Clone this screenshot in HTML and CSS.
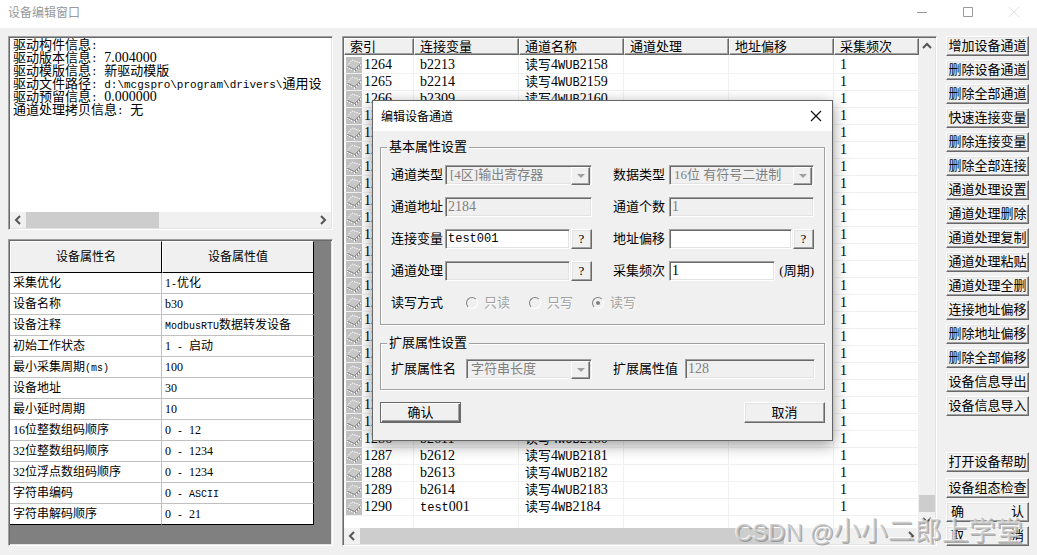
FILE: index.html
```html
<!DOCTYPE html>
<html lang="zh-CN">
<head>
<meta charset="utf-8">
<title>设备编辑窗口</title>
<link rel="stylesheet" href="styles.css">
</head>
<body>
<svg class="symbols" aria-hidden="true">
  <symbol id="chip" viewBox="0 0 16 16">
    <path d="M0 0H16V16H0z" fill="#c0c0c0"/>
    <path d="M1 9 6 3 15 6 9 12z" fill="#c8c8c8"/>
    <path d="M1 9 6 3 15 6" fill="none" stroke="#fff" stroke-dasharray="1.500 1"/>
    <path d="M1 9 8.500 12.500 15 6.500" fill="none" stroke="#8a8a8a"/>
    <path d="M1.500 10V11M3.500 11V12M5.500 12V13M8.500 13V15M10.500 11.500V13M12.500 9.500V11M14.500 7.500V9" stroke="#fff"/>
    <path d="M9.500 12.500V14M11.500 10.500V12M13.500 8.500V10" stroke="#808080"/>
  </symbol>
  <symbol id="left" viewBox="0 0 16 16"><path d="M10 4 6 8l4 4" fill="none" stroke="#555" stroke-width="2"/></symbol>
  <symbol id="right" viewBox="0 0 16 16"><path d="m6 4 4 4-4 4" fill="none" stroke="#555" stroke-width="2"/></symbol>
  <symbol id="up" viewBox="0 0 16 16"><path d="m4 10 4-4 4 4" fill="none" stroke="#555" stroke-width="2"/></symbol>
  <symbol id="down" viewBox="0 0 16 16"><path d="m4 6 4 4 4-4" fill="none" stroke="#555" stroke-width="2"/></symbol>
</svg>

<div class="window">
  <header class="titlebar">
    <h1 class="title">设备编辑窗口</h1>
    <button class="sysbtn" aria-label="最小化"><svg width="12" height="12"><path d="M1 6.500H11" stroke="#999"/></svg></button>
    <button class="sysbtn" aria-label="最大化"><svg width="12" height="12"><path d="M1.500 1.500H10.500V10.500H1.500z" fill="none" stroke="#999"/></svg></button>
    <button class="sysbtn" aria-label="关闭"><svg width="12" height="12"><path d="M1 1 11 11M11 1 1 11" stroke="#e2e2e2"/></svg></button>
  </header>

  <main class="main">
    <div class="left">
      <section class="sunken info">
        <div class="lines">
          <p>驱动构件信息<code>:</code></p>
          <p>驱动版本信息<code>: </code><span class="num">7.004000</span></p>
          <p>驱动模版信息<code>: </code>新驱动模版</p>
          <p>驱动文件路径<code>: d:\mcgspro\program\drivers\</code>通用设</p>
          <p>驱动预留信息<code>: </code><span class="num">0.000000</span></p>
          <p>通道处理拷贝信息<code>: </code>无</p>
        </div>
        <div class="hbar">
          <svg class="arrow"><use href="#left"/></svg>
          <div class="track"><div class="thumb info-thumb"></div></div>
          <svg class="arrow"><use href="#right"/></svg>
        </div>
      </section>
      <section class="sunken props">
        <table class="proptable">
          <thead><tr><th>设备属性名</th><th>设备属性值</th></tr></thead>
          <tbody>
            <tr><td>采集优化</td><td>1<code>-</code>优化</td></tr>
            <tr><td>设备名称</td><td>b30</td></tr>
            <tr><td>设备注释</td><td><code>ModbusRTU</code>数据转发设备</td></tr>
            <tr><td>初始工作状态</td><td>1<code> - </code>启动</td></tr>
            <tr><td>最小采集周期<code>(ms)</code></td><td>100</td></tr>
            <tr><td>设备地址</td><td>30</td></tr>
            <tr><td>最小延时周期</td><td>10</td></tr>
            <tr><td>16位整数组码顺序</td><td>0<code> - </code>12</td></tr>
            <tr><td>32位整数组码顺序</td><td>0<code> - </code>1234</td></tr>
            <tr><td>32位浮点数组码顺序</td><td>0<code> - </code>1234</td></tr>
            <tr><td>字符串编码</td><td>0<code> - ASCII</code></td></tr>
            <tr><td>字符串解码顺序</td><td>0<code> - </code>21</td></tr>
          </tbody>
        </table>
      </section>
    </div>

    <section class="sunken channels">
      <div class="view">
        <div class="listwrap">
        <table class="list">
          <colgroup><col class="c-index"><col class="c-mid"><col class="c-mid"><col class="c-mid"><col class="c-mid"><col></colgroup>
          <thead><tr><th>索引</th><th>连接变量</th><th>通道名称</th><th>通道处理</th><th>地址偏移</th><th>采集频次</th></tr></thead>
          <tbody>
            <tr><td><svg class="chip"><use href="#chip"/></svg>1264</td><td>b2213</td><td><span class="cjk">读写</span>4<code>WUB</code>2158</td><td></td><td></td><td>1</td></tr>
            <tr><td><svg class="chip"><use href="#chip"/></svg>1265</td><td>b2214</td><td><span class="cjk">读写</span>4<code>WUB</code>2159</td><td></td><td></td><td>1</td></tr>
            <tr><td><svg class="chip"><use href="#chip"/></svg>1266</td><td>b2309</td><td><span class="cjk">读写</span>4<code>WUB</code>2160</td><td></td><td></td><td>1</td></tr>
            <tr><td><svg class="chip"><use href="#chip"/></svg>1267</td><td></td><td></td><td></td><td></td><td>1</td></tr>
            <tr><td><svg class="chip"><use href="#chip"/></svg>1268</td><td></td><td></td><td></td><td></td><td>1</td></tr>
            <tr><td><svg class="chip"><use href="#chip"/></svg>1269</td><td></td><td></td><td></td><td></td><td>1</td></tr>
            <tr><td><svg class="chip"><use href="#chip"/></svg>1270</td><td></td><td></td><td></td><td></td><td>1</td></tr>
            <tr><td><svg class="chip"><use href="#chip"/></svg>1271</td><td></td><td></td><td></td><td></td><td>1</td></tr>
            <tr><td><svg class="chip"><use href="#chip"/></svg>1272</td><td></td><td></td><td></td><td></td><td>1</td></tr>
            <tr><td><svg class="chip"><use href="#chip"/></svg>1273</td><td></td><td></td><td></td><td></td><td>1</td></tr>
            <tr><td><svg class="chip"><use href="#chip"/></svg>1274</td><td></td><td></td><td></td><td></td><td>1</td></tr>
            <tr><td><svg class="chip"><use href="#chip"/></svg>1275</td><td></td><td></td><td></td><td></td><td>1</td></tr>
            <tr><td><svg class="chip"><use href="#chip"/></svg>1276</td><td></td><td></td><td></td><td></td><td>1</td></tr>
            <tr><td><svg class="chip"><use href="#chip"/></svg>1277</td><td></td><td></td><td></td><td></td><td>1</td></tr>
            <tr><td><svg class="chip"><use href="#chip"/></svg>1278</td><td></td><td></td><td></td><td></td><td>1</td></tr>
            <tr><td><svg class="chip"><use href="#chip"/></svg>1279</td><td></td><td></td><td></td><td></td><td>1</td></tr>
            <tr><td><svg class="chip"><use href="#chip"/></svg>1280</td><td></td><td></td><td></td><td></td><td>1</td></tr>
            <tr><td><svg class="chip"><use href="#chip"/></svg>1281</td><td></td><td></td><td></td><td></td><td>1</td></tr>
            <tr><td><svg class="chip"><use href="#chip"/></svg>1282</td><td></td><td></td><td></td><td></td><td>1</td></tr>
            <tr><td><svg class="chip"><use href="#chip"/></svg>1283</td><td></td><td></td><td></td><td></td><td>1</td></tr>
            <tr><td><svg class="chip"><use href="#chip"/></svg>1284</td><td></td><td></td><td></td><td></td><td>1</td></tr>
            <tr><td><svg class="chip"><use href="#chip"/></svg>1285</td><td></td><td></td><td></td><td></td><td>1</td></tr>
            <tr><td><svg class="chip"><use href="#chip"/></svg>1286</td><td>b2611</td><td><span class="cjk">读写</span>4<code>WUB</code>2180</td><td></td><td></td><td>1</td></tr>
            <tr><td><svg class="chip"><use href="#chip"/></svg>1287</td><td>b2612</td><td><span class="cjk">读写</span>4<code>WUB</code>2181</td><td></td><td></td><td>1</td></tr>
            <tr><td><svg class="chip"><use href="#chip"/></svg>1288</td><td>b2613</td><td><span class="cjk">读写</span>4<code>WUB</code>2182</td><td></td><td></td><td>1</td></tr>
            <tr><td><svg class="chip"><use href="#chip"/></svg>1289</td><td>b2614</td><td><span class="cjk">读写</span>4<code>WUB</code>2183</td><td></td><td></td><td>1</td></tr>
            <tr><td><svg class="chip"><use href="#chip"/></svg>1290</td><td><code>test</code>001</td><td><span class="cjk">读写</span>4<code>WB</code>2184</td><td></td><td></td><td>1</td></tr>
            <tr class="filler"><td></td><td></td><td></td><td></td><td></td><td></td></tr>
          </tbody>
        </table>
        </div>
        <div class="vbar">
          <svg class="arrow"><use href="#up"/></svg>
          <div class="vtrack"><div class="vthumb"></div></div>
          <svg class="arrow"><use href="#down"/></svg>
        </div>
      </div>
      <div class="hbar">
        <svg class="arrow"><use href="#left"/></svg>
        <div class="track"><div class="thumb list-thumb"></div></div>
        <svg class="arrow"><use href="#right"/></svg>
        <div class="corner"></div>
      </div>
    </section>

    <nav class="actions">
      <button class="btn">增加设备通道</button>
      <button class="btn">删除设备通道</button>
      <button class="btn">删除全部通道</button>
      <button class="btn">快速连接变量</button>
      <button class="btn">删除连接变量</button>
      <button class="btn">删除全部连接</button>
      <button class="btn">通道处理设置</button>
      <button class="btn">通道处理删除</button>
      <button class="btn">通道处理复制</button>
      <button class="btn">通道处理粘贴</button>
      <button class="btn">通道处理全删</button>
      <button class="btn">连接地址偏移</button>
      <button class="btn">删除地址偏移</button>
      <button class="btn">删除全部偏移</button>
      <button class="btn">设备信息导出</button>
      <button class="btn">设备信息导入</button>
      <div class="bottom">
        <button class="btn">打开设备帮助</button>
        <button class="btn">设备组态检查</button>
        <button class="btn spread">确 认</button>
        <button class="btn spread">取 消</button>
      </div>
    </nav>
  </main>

  <section class="dialog" role="dialog" aria-labelledby="dlg-title">
    <header class="dlg-head">
      <h2 class="dlg-title" id="dlg-title">编辑设备通道</h2>
      <button class="dlg-close" aria-label="关闭"><svg width="12" height="12"><path d="M1 1 11 11M11 1 1 11" stroke="#111" stroke-width="1.200"/></svg></button>
    </header>
    <form class="dlg-body">
      <fieldset class="group">
        <legend>基本属性设置</legend>
        <div class="basic">
          <label for="ctype">通道类型</label>
          <div class="combo"><select id="ctype" disabled><option>[4区]输出寄存器</option></select></div>
          <label class="second" for="dtype">数据类型</label>
          <div class="combo"><select id="dtype" disabled><option>16位 有符号二进制</option></select></div>

          <label for="addr">通道地址</label>
          <input class="field" id="addr" value="2184" disabled>
          <label class="second" for="count">通道个数</label>
          <input class="field" id="count" value="1" disabled>

          <label for="var">连接变量</label>
          <div class="pair"><input class="field mono" id="var" value="test001"><button class="btn ask" type="button">?</button></div>
          <label class="second" for="offset">地址偏移</label>
          <div class="pair"><input class="field" id="offset"><button class="btn ask" type="button">?</button></div>

          <label for="proc">通道处理</label>
          <div class="pair"><input class="field" id="proc" disabled><button class="btn ask" type="button">?</button></div>
          <label class="second" for="freq">采集频次</label>
          <div class="pair unit"><input class="field" id="freq" value="1"><span>(周期)</span></div>

          <span>读写方式</span>
          <div class="radios">
            <label><input type="radio" name="rw" disabled>只读</label>
            <label><input type="radio" name="rw" disabled>只写</label>
            <label><input type="radio" name="rw" checked disabled>读写</label>
          </div>
        </div>
      </fieldset>
      <fieldset class="group">
        <legend>扩展属性设置</legend>
        <div class="extra">
          <label for="ename">扩展属性名</label>
          <div class="combo"><select id="ename" disabled><option>字符串长度</option></select></div>
          <label class="second" for="evalue">扩展属性值</label>
          <input class="field" id="evalue" value="128" disabled>
        </div>
      </fieldset>
      <div class="dlg-actions">
        <button class="btn default" type="button">确认</button>
        <button class="btn" type="button">取消</button>
      </div>
    </form>
  </section>

  <div class="watermark">CSDN @<span>小小二郎上学堂</span></div>
</div>
</body>
</html>
```
FILE: styles.css
```css
* { box-sizing: border-box; }

body {
  margin: 0;
  background: #f0f0f0;
  color: #000;
  font: 13px/16px "Liberation Serif", "Noto Sans CJK SC", serif;
}

h1, h2, p { margin: 0; font-weight: normal; }
button, input, select { font: inherit; color: inherit; margin: 0; border-radius: 0; }
code { font: 12px/0 "Liberation Mono", "Noto Sans CJK SC", monospace; white-space: pre; }
.num { font-size: 14px; line-height: 0; }
.cjk { font-size: 13px; line-height: 0; }
.symbols { display: none; }

.window {
  position: relative;
  display: flex;
  flex-direction: column;
  min-height: 100vh;
  overflow: hidden;
}

.titlebar { display: flex; align-items: center; height: 28px; padding-left: 8px; background: #fff; }
.title {
  flex: 1;
  color: #999;
  font: 12px/24px "Noto Sans CJK SC", sans-serif;
  padding-bottom: 4px;
}
.sysbtn { display: grid; place-items: center; width: 46px; height: 24px; padding: 0; border: 0; background: none; align-self: flex-start; }

.main {
  flex: 1;
  display: grid;
  grid-template-columns: minmax(0, 325fr) minmax(0, 595fr) 83px;
  gap: 9px;
  padding: 8px 8px 9px;
}
.left { display: flex; flex-direction: column; gap: 9px; }

.sunken {
  padding: 1px;
  border: 1px solid;
  border-color: #a0a0a0 #fff #fff #a0a0a0;
  box-shadow: inset 1px 1px #696969, inset -1px -1px #e3e3e3;
  background: #fff;
  overflow: hidden;
}

/* driver information */
.info { display: flex; flex-direction: column; height: 194px; }
.lines { flex: 1; padding-left: 3px; overflow: hidden; line-height: 13px; white-space: nowrap; }
.lines code { font-size: 11px; }

.hbar { display: flex; height: 16px; background: #f0f0f0; }
.arrow { display: block; flex: none; width: 16px; height: 16px; }
.track { flex: 1; }
.thumb { height: 100%; background: #cdcdcd; }
.info-thumb { width: 46%; }
.list-thumb { width: 78%; }
.corner { width: 16px; }

/* device properties */
.props { flex: 1; background: #808080; }
.proptable {
  width: 304px;
  table-layout: fixed;
  border-collapse: separate;
  border-spacing: 0;
  background: #fff;
  font-size: 12px;
}
.proptable th {
  height: 32px;
  padding: 0;
  border: 1px solid;
  border-color: #fff #000 #000 #fff;
  background: #f0f0f0;
  font-weight: normal;
}
.proptable td {
  height: 21px;
  padding: 0 0 0 3px;
  border: solid #c0c0c0;
  border-width: 0 1px 1px 0;
  white-space: nowrap;
}
.proptable td:last-child { border-right-color: #000; }
.proptable tr:last-child td { border-bottom-color: #000; }
.proptable code { font-size: 10px; }

/* channel list */
.channels { display: flex; flex-direction: column; }
.view { flex: 1; display: flex; }
.listwrap { flex: 1; display: flex; min-width: 0; }
.list { width: 100%; table-layout: fixed; border-collapse: separate; border-spacing: 0; }
.c-index { width: 70px; }
.c-mid { width: 105px; }
.list th {
  height: 17px;
  padding: 0 0 0 5px;
  border: 1px solid;
  border-color: #fff #696969 #696969 #fff;
  box-shadow: inset -1px -1px #a0a0a0;
  background: #f0f0f0;
  font-weight: normal;
  line-height: 14px;
  text-align: left;
}
.list td {
  height: 17px;
  padding: 0 0 0 6px;
  border: solid #f0f0f0;
  border-width: 0 1px 1px 0;
  font-size: 14px;
  line-height: 16px;
  white-space: nowrap;
}
.list td:first-child { padding-left: 2px; }
.list tbody tr:first-child td { height: 19px; vertical-align: bottom; }
.list .filler td { height: auto; border-bottom: 0; }
.chip { float: left; width: 16px; height: 16px; margin-right: 2px; }
.vbar { display: flex; flex-direction: column; width: 16px; background: #f0f0f0; }
.vtrack { flex: 1; display: flex; align-items: flex-end; }
.vthumb { width: 100%; height: 17px; background: #cdcdcd; }

/* buttons */
.btn {
  padding: 0;
  border: 1px solid;
  border-color: #fff #696969 #696969 #fff;
  box-shadow: inset -1px -1px #a0a0a0, inset 1px 1px #e3e3e3;
  background: #f0f0f0;
  height: 20px;
  line-height: 16px;
  white-space: nowrap;
}
.actions { display: flex; flex-direction: column; gap: 4px; }
.bottom { display: flex; flex-direction: column; gap: 4px; margin-top: auto; }
.bottom .btn:first-child { margin-bottom: 2px; }
.spread { padding: 0 4px; text-align-last: justify; }

/* channel dialog */
.dialog {
  position: absolute;
  left: 372px;
  top: 100px;
  width: 461px;
  border: 1px solid #666;
  background: #f0f0f0;
  box-shadow: 0 4px 14px rgba(0, 0, 0, .4);
}
.dlg-head { display: flex; align-items: center; height: 30px; padding-left: 8px; background: #fff; }
.dlg-title { flex: 1; font: 12px/28px "Noto Sans CJK SC", sans-serif; }
.dlg-close { display: grid; place-items: center; width: 32px; height: 28px; padding: 0; border: 0; background: none; }
.dlg-body { display: flex; flex-direction: column; padding: 8px 7px 17px; }
.group {
  min-width: 0;
  margin: 0 0 10px;
  padding: 8px 10px 10px;
  border: 1px solid #a0a0a0;
  box-shadow: 1px 1px #fff, inset 1px 1px #fff;
}
.group legend { margin-left: -4px; padding: 0 2px; background: #f0f0f0; }
.basic, .extra { display: grid; grid-auto-rows: 20px; align-items: center; }
.basic { grid-template-columns: 54px 147px 77px 145px; row-gap: 12px; padding: 2px 0 1px; }
.extra { grid-template-columns: 75px 126px 93px 130px; }
.second { padding-left: 21px; }

.field, .combo select {
  display: block;
  width: 100%;
  min-width: 0;
  height: 20px;
  padding: 0 2px;
  border: 1px solid;
  border-color: #a0a0a0 #fff #fff #a0a0a0;
  box-shadow: inset 1px 1px #696969, inset -1px -1px #e3e3e3;
  background: #fff;
  outline: none;
}
.field { font-size: 14px; }
.mono { font: 12px "Liberation Mono", monospace; }
.field:disabled, .combo select:disabled { background: #f0f0f0; color: #808080; opacity: 1; }
.combo { position: relative; }
.combo select { appearance: none; padding: 0 4px; }
.combo::before {
  content: "";
  position: absolute;
  right: 2px;
  top: 2px;
  width: 17px;
  height: 16px;
  border: 1px solid;
  border-color: #fff #696969 #696969 #fff;
  box-shadow: inset -1px -1px #a0a0a0;
  background: #f0f0f0;
}
.combo::after {
  content: "";
  position: absolute;
  right: 7px;
  top: 9px;
  border: solid transparent;
  border-width: 4px 4px 0;
  border-top-color: #a0a0a0;
}
.pair { display: flex; gap: 1px; align-items: center; }
.pair .field { flex: 1; }
.unit { gap: 4px; }
.ask { width: 21px; }

.radios { grid-column: 2 / -1; display: flex; gap: 19px; padding-left: 21px; color: #a0a0a0; text-shadow: 1px 1px #fff; }
.radios label { display: flex; align-items: center; gap: 6px; }
.radios input {
  appearance: none;
  display: grid;
  place-items: center;
  width: 12px;
  height: 12px;
  border: 1px solid;
  border-color: #808080 #fff #fff #808080;
  border-radius: 50%;
}
.radios input:checked::before { content: ""; width: 4px; height: 4px; border-radius: 50%; background: #808080; }

.dlg-actions { display: flex; justify-content: space-between; padding-top: 2px; }
.dlg-actions .btn { width: 81px; height: 21px; }
.dlg-actions .default { border-color: #696969; box-shadow: inset 1px 1px #fff, inset -1px -1px #696969, inset -2px -2px #a0a0a0; }

.watermark {
  position: absolute;
  right: 14px;
  bottom: 4px;
  color: rgba(190, 190, 190, .7);
  font: 24px/36px "Liberation Sans", "Noto Sans CJK SC", sans-serif;
  text-shadow: -1px -1px rgba(255, 255, 255, .8), 1px 1px rgba(120, 120, 120, .6);
  white-space: nowrap;
  pointer-events: none;
}
.watermark span { font-size: 27px; }
```
